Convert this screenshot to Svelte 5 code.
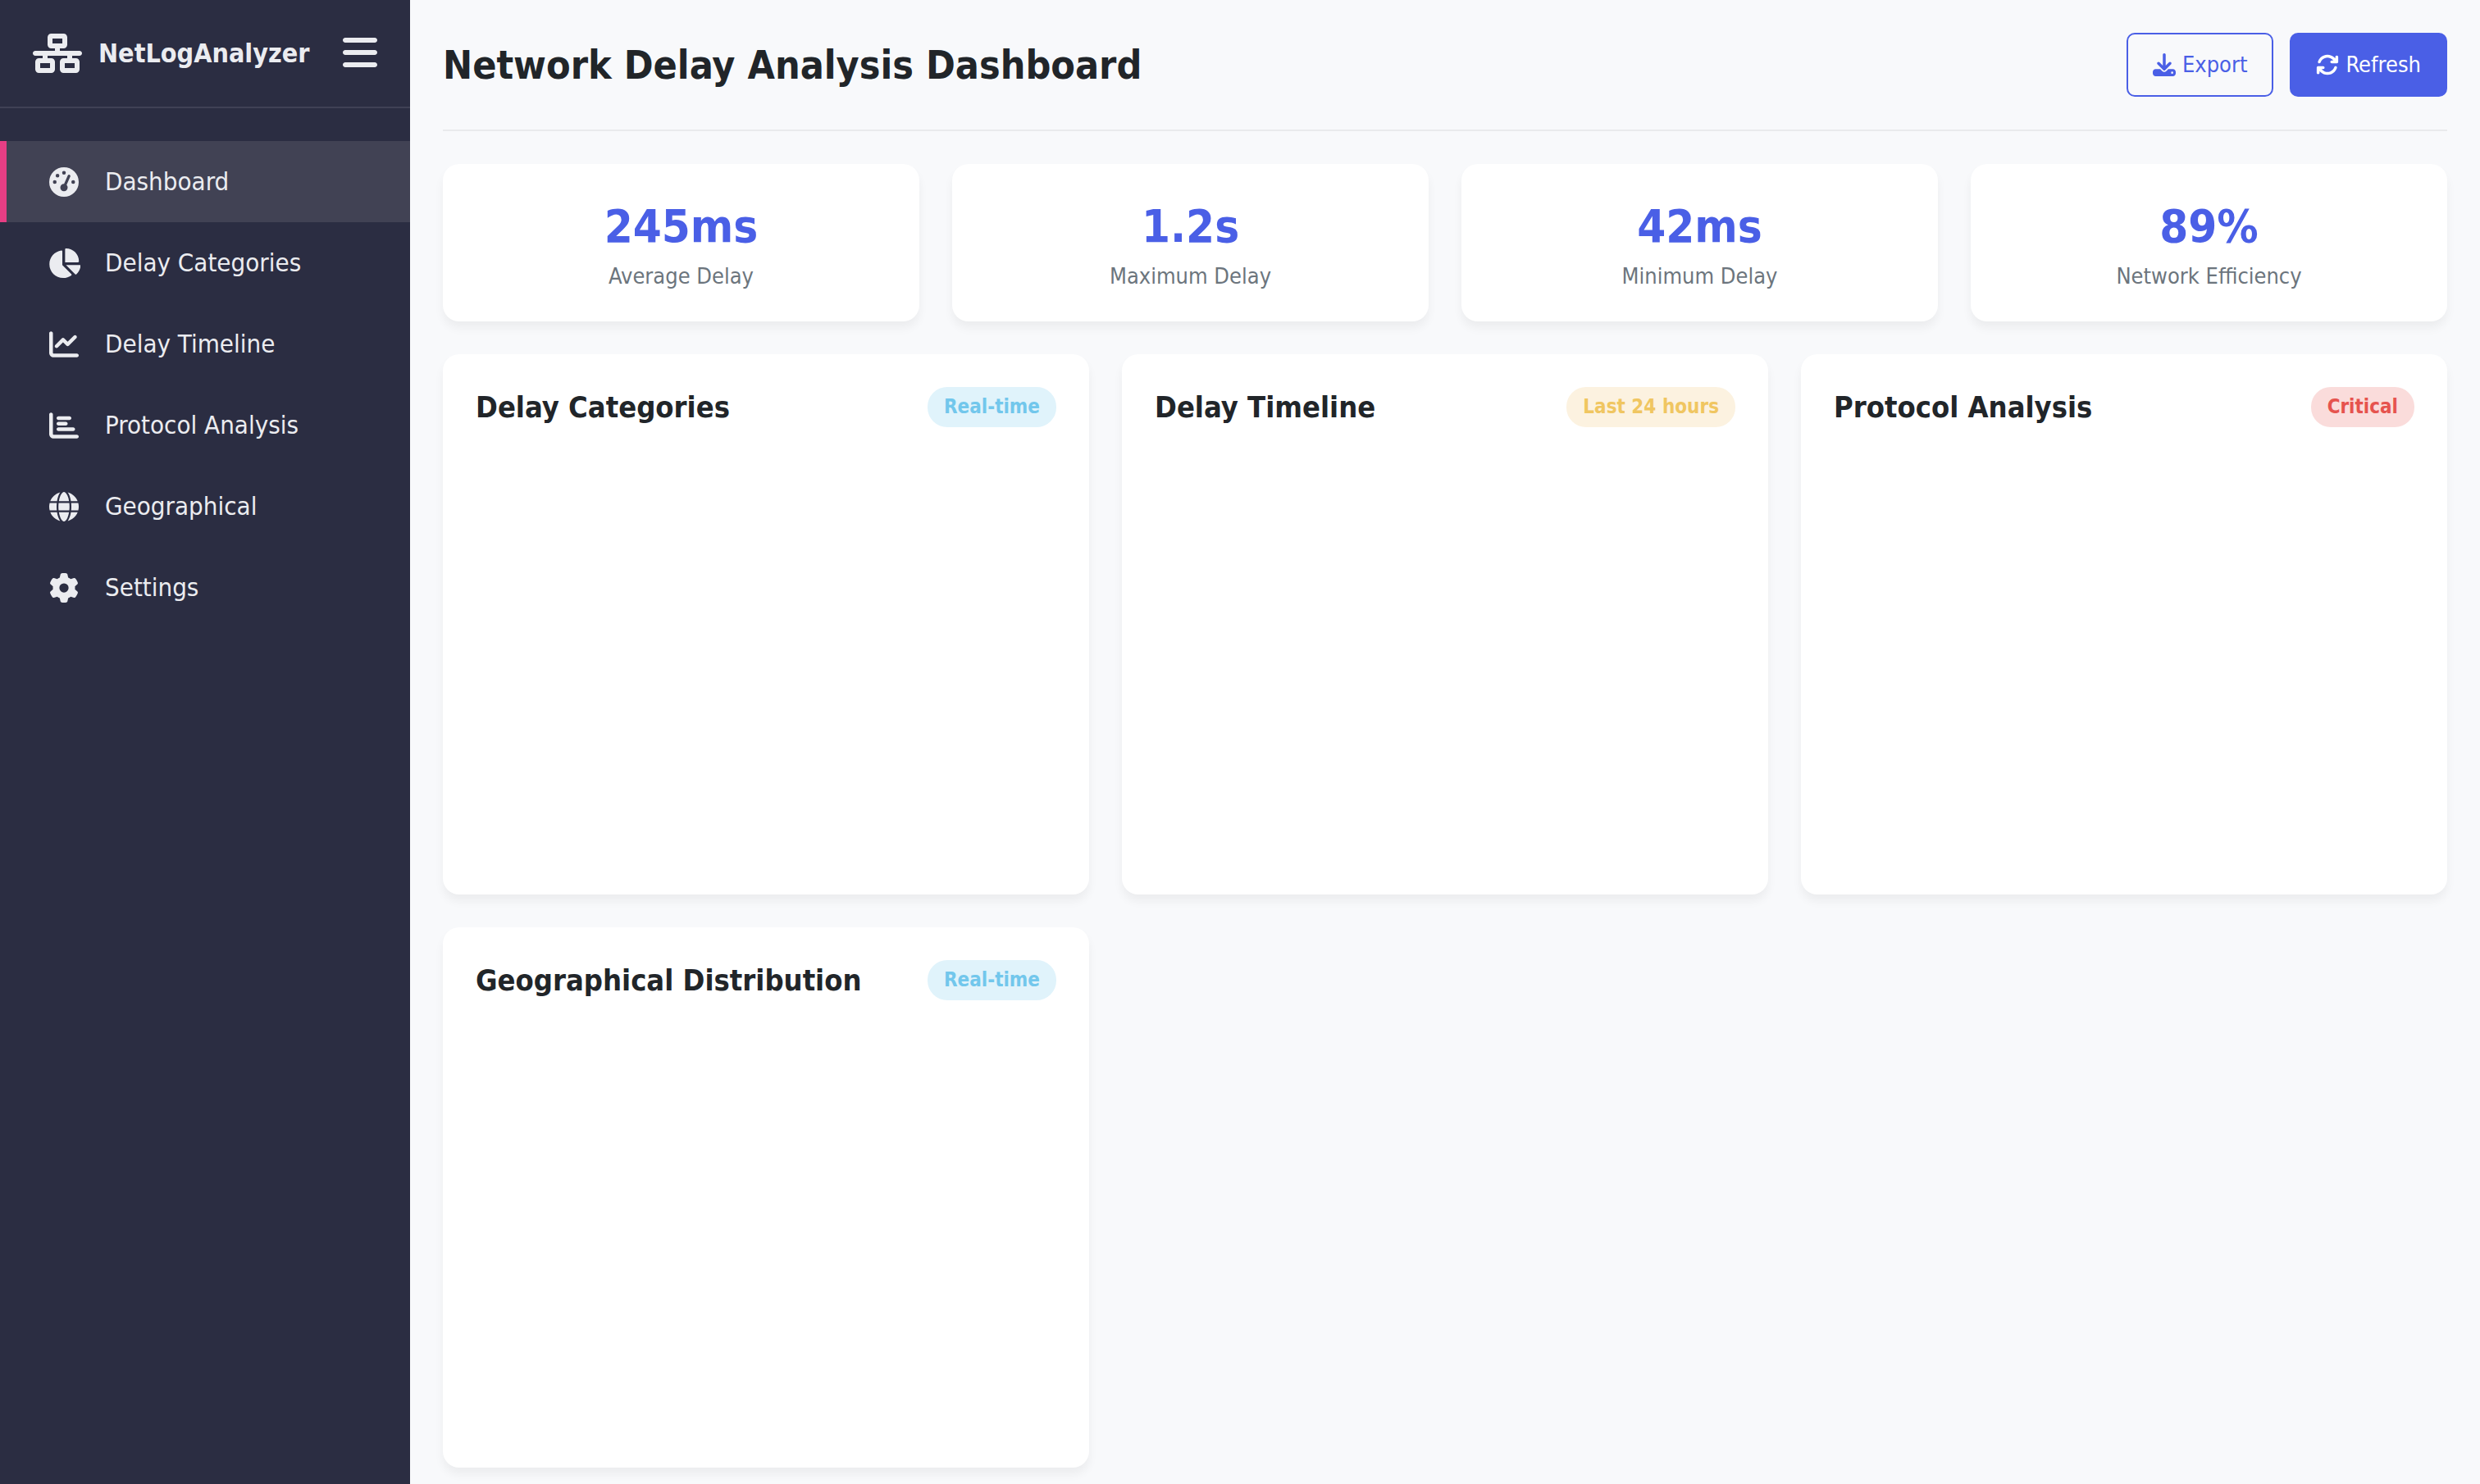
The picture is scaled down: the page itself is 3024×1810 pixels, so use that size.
<script>
  const icons = {
    network: {
      w: 640,
      d: 'M256 64H384v64H256V64zM240 0c-26.5 0-48 21.5-48 48v96c0 26.5 21.5 48 48 48h48v32H32c-17.7 0-32 14.3-32 32s14.3 32 32 32h96v32H80c-26.5 0-48 21.5-48 48v96c0 26.5 21.5 48 48 48H240c26.5 0 48-21.5 48-48V368c0-26.5-21.5-48-48-48H192V288H448v32H400c-26.5 0-48 21.5-48 48v96c0 26.5 21.5 48 48 48H560c26.5 0 48-21.5 48-48V368c0-26.5-21.5-48-48-48H512V288h96c17.7 0 32-14.3 32-32s-14.3-32-32-32H352V192h48c26.5 0 48-21.5 48-48V48c0-26.5-21.5-48-48-48H240zM96 448V384H224v64H96zm320-64H544v64H416V384z'
    },
    bars: {
      w: 448,
      d: 'M0 96C0 78.3 14.3 64 32 64H416c17.7 0 32 14.3 32 32s-14.3 32-32 32H32C14.3 128 0 113.7 0 96zM0 256c0-17.7 14.3-32 32-32H416c17.7 0 32 14.3 32 32s-14.3 32-32 32H32c-17.7 0-32-14.3-32-32zM448 416c0 17.7-14.3 32-32 32H32c-17.7 0-32-14.3-32-32s14.3-32 32-32H416c17.7 0 32 14.3 32 32z'
    },
    gauge: {
      w: 512,
      d: 'M0 256a256 256 0 1 1 512 0A256 256 0 1 1 0 256zM288 96a32 32 0 1 0 -64 0 32 32 0 1 0 64 0zM256 416c35.3 0 64-28.7 64-64c0-17.4-6.9-33.1-18.1-44.6L366 161.7c5.3-12.1-.2-26.3-12.3-31.6s-26.3 .2-31.6 12.3L257.9 288c-.6 0-1.3 0-1.9 0c-35.3 0-64 28.7-64 64s28.7 64 64 64zM176 144a32 32 0 1 0 -64 0 32 32 0 1 0 64 0zM96 288a32 32 0 1 0 0-64 32 32 0 1 0 0 64zm352-32a32 32 0 1 0 -64 0 32 32 0 1 0 64 0z'
    },
    pie: {
      w: 576,
      d: 'M304 240V16.6c0-9 7-16.6 16-16.6C443.7 0 544 100.3 544 224c0 9-7.6 16-16.6 16H304zM32 272C32 150.7 122.1 50.3 239 34.3c9.2-1.3 17 6.1 17 15.4V288L412.5 444.5c6.7 6.7 6.2 17.7-1.5 23.1C371.8 495.6 323.8 512 272 512C139.5 512 32 404.6 32 272zm526.4 16c9.3 0 16.6 7.8 15.4 17c-7.7 55.9-34.6 105.6-73.9 142.3c-6 5.6-15.4 5.2-21.2-.7L320 288H558.4z'
    },
    line: {
      w: 512,
      d: 'M64 64c0-17.7-14.3-32-32-32S0 46.3 0 64V400c0 44.2 35.8 80 80 80H480c17.7 0 32-14.3 32-32s-14.3-32-32-32H80c-8.8 0-16-7.2-16-16V64zm406.6 86.6c12.5-12.5 12.5-32.8 0-45.3s-32.8-12.5-45.3 0L320 210.7l-57.4-57.4c-12.5-12.5-32.8-12.5-45.3 0l-112 112c-12.5 12.5-12.5 32.8 0 45.3s32.8 12.5 45.3 0L240 221.3l57.4 57.4c12.5 12.5 32.8 12.5 45.3 0l128-128z'
    },
    bar: {
      w: 512,
      d: 'M32 32c17.7 0 32 14.3 32 32V400c0 8.8 7.2 16 16 16H480c17.7 0 32 14.3 32 32s-14.3 32-32 32H80c-44.2 0-80-35.8-80-80V64C0 46.3 14.3 32 32 32zm96 96c0-17.7 14.3-32 32-32l192 0c17.7 0 32 14.3 32 32s-14.3 32-32 32H160c-17.7 0-32-14.3-32-32zm32 64H288c17.7 0 32 14.3 32 32s-14.3 32-32 32H160c-17.7 0-32-14.3-32-32s14.3-32 32-32zm0 96H416c17.7 0 32 14.3 32 32s-14.3 32-32 32H160c-17.7 0-32-14.3-32-32s14.3-32 32-32z'
    },
    globe: {
      w: 512,
      d: 'M352 256c0 22.2-1.2 43.6-3.3 64H163.3c-2.2-20.4-3.3-41.8-3.3-64s1.2-43.6 3.3-64H348.7c2.2 20.4 3.3 41.8 3.3 64zm28.8-64H503.9c5.3 20.5 8.1 41.9 8.1 64s-2.8 43.5-8.1 64H380.8c2.1-20.6 3.2-42 3.2-64s-1.1-43.4-3.2-64zm112.6-32H376.7c-10-63.9-29.8-117.4-55.3-151.6c78.3 20.7 142 77.5 171.9 151.6zm-149.1 0H167.7c6.1-36.4 15.5-68.6 27-94.7c10.5-23.6 22.2-40.7 33.5-51.5C239.4 3.2 248.7 0 256 0s16.6 3.2 27.8 13.8c11.3 10.8 23 27.9 33.5 51.5c11.6 26 20.9 58.2 27 94.7zm-209 0H18.6C48.6 85.9 112.2 29.1 190.6 8.4C165.1 42.6 145.3 96.1 135.3 160zM8.1 192H131.2c-2.1 20.6-3.2 42-3.2 64s1.1 43.4 3.2 64H8.1C2.8 299.5 0 278.1 0 256s2.8-43.5 8.1-64zM194.7 446.6c-11.6-26-20.9-58.2-27-94.6H344.3c-6.1 36.4-15.5 68.6-27 94.6c-10.5 23.6-22.2 40.7-33.5 51.5C272.6 508.8 263.3 512 256 512s-16.6-3.2-27.8-13.8c-11.3-10.8-23-27.9-33.5-51.5zM135.3 352c10 63.9 29.8 117.4 55.3 151.6C112.2 482.9 48.6 426.1 18.6 352H135.3zm358.1 0c-30 74.1-93.6 130.9-171.9 151.6c25.5-34.2 45.2-87.7 55.3-151.6H493.4z'
    },
    gear: {
      w: 512,
      d: 'M495.9 166.6c3.2 8.7 .5 18.4-6.4 24.6l-43.3 39.4c1.1 8.3 1.7 16.8 1.7 25.4s-.6 17.1-1.7 25.4l43.3 39.4c6.9 6.2 9.6 15.9 6.4 24.6c-4.4 11.9-9.7 23.3-15.8 34.3l-4.7 8.1c-6.6 11-14 21.4-22.1 31.2c-5.9 7.2-15.7 9.6-24.5 6.8l-55.7-17.7c-13.4 10.3-28.2 18.9-44 25.4l-12.5 57.1c-2 9.1-9 16.3-18.2 17.8c-13.8 2.3-28 3.5-42.5 3.5s-28.7-1.2-42.5-3.5c-9.2-1.5-16.2-8.7-18.2-17.8l-12.5-57.1c-15.8-6.5-30.6-15.1-44-25.4L83.1 425.9c-8.8 2.8-18.6 .3-24.5-6.8c-8.1-9.8-15.5-20.2-22.1-31.2l-4.7-8.1c-6.1-11-11.4-22.4-15.8-34.3c-3.2-8.7-.5-18.4 6.4-24.6l43.3-39.4C64.6 273.1 64 264.6 64 256s.6-17.1 1.7-25.4L22.4 191.2c-6.9-6.2-9.6-15.9-6.4-24.6c4.4-11.9 9.7-23.3 15.8-34.3l4.7-8.1c6.6-11 14-21.4 22.1-31.2c5.9-7.2 15.7-9.6 24.5-6.8l55.7 17.7c13.4-10.3 28.2-18.9 44-25.4l12.5-57.1c2-9.1 9-16.3 18.2-17.8C227.3 1.2 241.5 0 256 0s28.7 1.2 42.5 3.5c9.2 1.5 16.2 8.7 18.2 17.8l12.5 57.1c15.8 6.5 30.6 15.1 44 25.4l55.7-17.7c8.8-2.8 18.6-.3 24.5 6.8c8.1 9.8 15.5 20.2 22.1 31.2l4.7 8.1c6.1 11 11.4 22.4 15.8 34.3zM256 336a80 80 0 1 0 0-160 80 80 0 1 0 0 160z'
    },
    download: {
      w: 512,
      d: 'M288 32c0-17.7-14.3-32-32-32s-32 14.3-32 32V274.7l-73.4-73.4c-12.5-12.5-32.8-12.5-45.3 0s-12.5 32.8 0 45.3l128 128c12.5 12.5 32.8 12.5 45.3 0l128-128c12.5-12.5 12.5-32.8 0-45.3s-32.8-12.5-45.3 0L288 274.7V32zM64 352c-35.3 0-64 28.7-64 64v32c0 35.3 28.7 64 64 64H448c35.3 0 64-28.7 64-64V416c0-35.3-28.7-64-64-64H346.5l-45.3 45.3c-25 25-65.5 25-90.5 0L165.5 352H64zm368 56a24 24 0 1 1 0 48 24 24 0 1 1 0-48z'
    },
    rotate: {
      w: 512,
      d: 'M105.1 202.6c7.7-21.8 20.2-42.3 37.8-59.8c62.5-62.5 163.8-62.5 226.3 0L386.3 160H352c-17.7 0-32 14.3-32 32s14.3 32 32 32H463.5c0 0 0 0 0 0h.4c17.7 0 32-14.3 32-32V80c0-17.7-14.3-32-32-32s-32 14.3-32 32v35.2L414.4 97.6c-87.5-87.5-229.3-87.5-316.8 0C73.2 122 55.6 150.7 44.8 181.4c-5.9 16.7 2.9 34.9 19.5 40.8s34.9-2.9 40.8-19.5zM39 289.3c-5 1.5-9.8 4.2-13.7 8.2c-4 4-6.7 8.8-8.1 14c-.3 1.2-.6 2.5-.8 3.8c-.3 1.7-.4 3.4-.4 5.1V432c0 17.7 14.3 32 32 32s32-14.3 32-32V396.9l17.6 17.5 0 0c87.5 87.4 229.3 87.4 316.7 0c24.4-24.4 42.1-53.1 52.9-83.7c5.9-16.7-2.9-34.9-19.5-40.8s-34.9 2.9-40.8 19.5c-7.7 21.8-20.2 42.3-37.8 59.8c-62.5 62.5-163.8 62.5-226.3 0l-.1-.1L125.6 352H160c17.7 0 32-14.3 32-32s-14.3-32-32-32H48.4c-1.6 0-3.2 .1-4.8 .3s-3.1 .5-4.6 1z'
    }
  };

  const nav = [
    { icon: 'gauge', label: 'Dashboard' },
    { icon: 'pie', label: 'Delay Categories' },
    { icon: 'line', label: 'Delay Timeline' },
    { icon: 'bar', label: 'Protocol Analysis' },
    { icon: 'globe', label: 'Geographical' },
    { icon: 'gear', label: 'Settings' }
  ];

  const stats = [
    { value: '245ms', label: 'Average Delay' },
    { value: '1.2s', label: 'Maximum Delay' },
    { value: '42ms', label: 'Minimum Delay' },
    { value: '89%', label: 'Network Efficiency' }
  ];

  const charts = [
    { title: 'Delay Categories', badge: 'Real-time', tone: 'info' },
    { title: 'Delay Timeline', badge: 'Last 24 hours', tone: 'warning' },
    { title: 'Protocol Analysis', badge: 'Critical', tone: 'danger' },
    { title: 'Geographical Distribution', badge: 'Real-time', tone: 'info' }
  ];

  let active = $state('Dashboard');
</script>

{#snippet icon(name, size)}
  <svg class="icon {size}" viewBox="0 0 {icons[name].w} 512" fill="currentColor" aria-hidden="true">
    <path d={icons[name].d} />
  </svg>
{/snippet}

<div class="layout">
  <aside class="sidebar">
    <div class="brand">
      {@render icon('network', 'large')}
      <span class="brand-name">NetLogAnalyzer</span>
      <button class="toggle" type="button" aria-label="Toggle sidebar">
        {@render icon('bars', 'large')}
      </button>
    </div>
    <nav aria-label="Main">
      {#each nav as item}
        <a
          class="nav-item"
          class:active={active === item.label}
          href="#{item.icon}"
          aria-current={active === item.label ? 'page' : undefined}
          onclick={() => (active = item.label)}
        >
          <span class="nav-icon">{@render icon(item.icon, 'medium')}</span>
          {item.label}
        </a>
      {/each}
    </nav>
  </aside>

  <main class="content">
    <header class="page-header">
      <h1>Network Delay Analysis Dashboard</h1>
      <div class="actions">
        <button class="btn outline" type="button">{@render icon('download', 'small')}Export</button>
        <button class="btn primary" type="button">{@render icon('rotate', 'small')}Refresh</button>
      </div>
    </header>

    <section class="stats" aria-label="Key figures">
      {#each stats as stat}
        <div class="card stat">
          <div class="stat-value">{stat.value}</div>
          <div class="stat-label">{stat.label}</div>
        </div>
      {/each}
    </section>

    <section class="charts" aria-label="Charts">
      {#each charts as chart}
        <article class="card chart">
          <div class="chart-head">
            <h2>{chart.title}</h2>
            <span class="badge {chart.tone}">{chart.badge}</span>
          </div>
          <div class="chart-body"></div>
        </article>
      {/each}
    </section>
  </main>
</div>

<style>
  :global(body) {
    margin: 0;
    background: #f8f9fb;
  }

  .layout {
    display: flex;
    min-height: 100vh;
    font-family: Tahoma, 'DejaVu Sans Condensed', 'Noto Sans', sans-serif;
    font-size: 32px;
    line-height: 39px;
    color: #212529;
  }

  .icon {
    display: block;
    flex: none;
    width: auto;
  }
  .large {
    height: 48px;
  }
  .medium {
    height: 36px;
  }
  .small {
    height: 28px;
  }

  .sidebar {
    box-sizing: border-box;
    flex: none;
    width: 500px;
    background: #2b2d42;
    color: #ebecf0;
  }
  .brand {
    display: flex;
    align-items: center;
    gap: 20px;
    height: 50px;
    padding: 40px;
    border-bottom: 2px solid #404155;
  }
  .brand-name {
    font-weight: bold;
  }
  .toggle {
    align-self: flex-start;
    margin-left: auto;
    padding: 0;
    border: 0;
    background: none;
    color: inherit;
    cursor: pointer;
  }

  nav {
    padding: 40px 0;
  }
  .nav-item {
    display: flex;
    align-items: center;
    gap: 30px;
    padding: 30px 50px;
    border-left: 8px solid transparent;
    color: inherit;
    font-size: 31px;
    text-decoration: none;
  }
  .nav-item.active {
    border-left-color: #e63e84;
    background: #414254;
  }
  .nav-icon {
    display: flex;
    justify-content: center;
    width: 40px;
  }

  .content {
    flex: 1;
    min-width: 0;
    padding: 40px 40px 20px;
  }
  .page-header {
    display: flex;
    align-items: center;
    justify-content: space-between;
    margin-bottom: 40px;
    padding-bottom: 40px;
    border-bottom: 2px solid #e9eaec;
  }
  h1,
  h2 {
    margin: 0;
    font-weight: bold;
  }
  h1 {
    font-size: 48px;
    line-height: 58px;
  }
  h2 {
    font-size: 36px;
    line-height: 44px;
  }

  .actions {
    display: flex;
    gap: 20px;
  }
  .btn {
    display: flex;
    align-items: center;
    gap: 8px;
    padding: 20px 30px;
    border: 2px solid #4a5fe6;
    border-radius: 10px;
    font-family: inherit;
    font-size: 27px;
    line-height: 34px;
    cursor: pointer;
  }
  .outline {
    background: transparent;
    color: #4a5fe6;
  }
  .primary {
    background: #4a5fe6;
    color: #fff;
  }

  .stats,
  .charts {
    display: grid;
    gap: 40px;
  }
  .stats {
    grid-template-columns: repeat(4, 1fr);
    margin-bottom: 40px;
  }
  .charts {
    grid-template-columns: repeat(3, 1fr);
  }
  .card {
    padding: 40px;
    border-radius: 20px;
    background: #fff;
    box-shadow: 0 8px 12px rgba(0, 0, 0, 0.05);
  }
  .stat {
    padding: 42px 40px 38px;
    text-align: center;
  }
  .stat-value {
    margin-bottom: 10px;
    font-size: 56px;
    font-weight: bold;
    line-height: 68px;
    color: #4a5fe6;
  }
  .stat-label {
    font-size: 27px;
    line-height: 34px;
    color: #6c757d;
  }

  .chart-head {
    display: flex;
    align-items: center;
    justify-content: space-between;
    margin-bottom: 30px;
  }
  .chart-body {
    height: 500px;
  }
  .badge {
    padding: 10px 20px;
    border-radius: 24px;
    font-size: 24px;
    font-weight: bold;
    line-height: 29px;
  }
  .info {
    background: #e0f3fb;
    color: #72c7ec;
  }
  .warning {
    background: #fcf2e0;
    color: #f0c661;
  }
  .danger {
    background: #fadcdb;
    color: #e6534e;
  }
</style>
